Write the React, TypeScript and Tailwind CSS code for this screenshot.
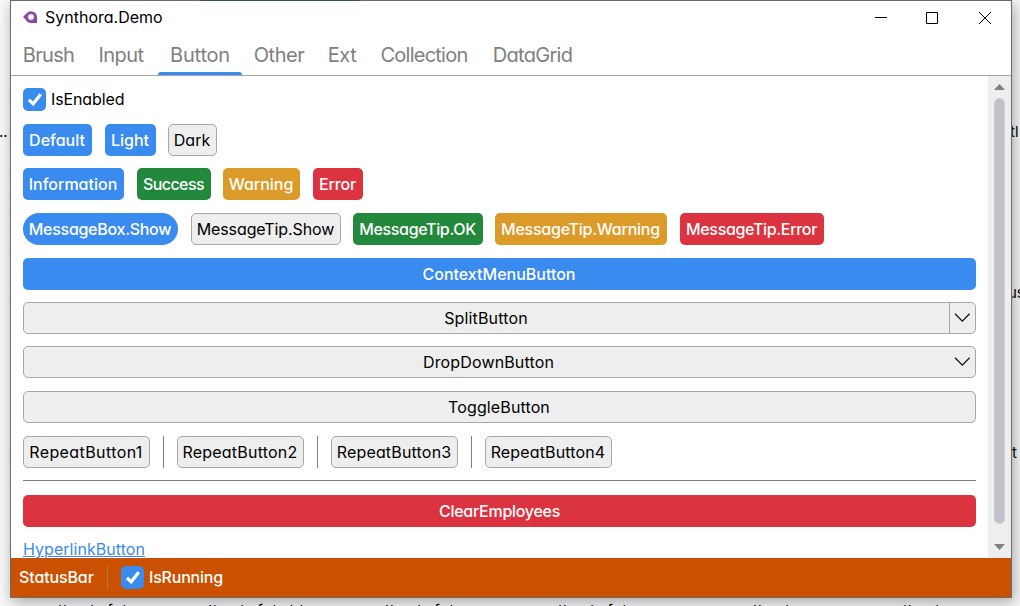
import type { ReactNode } from "react";

const tones = {
  blue: "bg-[#3a8bf0] text-white font-medium",
  green: "bg-[#21883c] text-white font-medium",
  amber: "bg-[#dc9a28] text-white font-medium",
  red: "bg-[#dc3340] text-white font-medium",
  plain: "bg-[#eeeeee] text-black border border-[#a8a8a8]",
};

type ButtonProps = { tone: keyof typeof tones; className?: string; children: ReactNode };

function Button({ tone, className = "rounded-[5px]", children }: ButtonProps) {
  return (
    <button
      className={`flex h-8 shrink-0 items-center justify-center whitespace-nowrap ${tones[tone]} ${className}`}
    >
      {children}
    </button>
  );
}

function CheckMark() {
  return (
    <span className="flex size-[23px] shrink-0 items-center justify-center rounded-[5px] bg-[#3a8bf0]">
      <svg width="23" height="23" viewBox="0 0 23 23" fill="none" stroke="white" strokeWidth="3.2">
        <path d="M6 11.8 10.2 15.8 17.7 6.3" />
      </svg>
    </span>
  );
}

function Chevron() {
  return (
    <svg width="16" height="10" viewBox="0 0 16 10" fill="none" stroke="#111" strokeWidth="1.3">
      <path d="M1 .8 8.3 8.1 15.6 .8" />
    </svg>
  );
}

const tabs = [
  { label: "Brush", width: "w-[75px]", tracking: "tracking-[-0.7px]" },
  { label: "Input", width: "w-[72px]", tracking: "tracking-[-0.6px]" },
  { label: "Button", width: "w-[84px]", tracking: "tracking-[-0.2px]" },
  { label: "Other", width: "w-[74px]", tracking: "tracking-[-0.5px]" },
  { label: "Ext", width: "w-[52px]", tracking: "tracking-[-0.4px]" },
  { label: "Collection", width: "w-[112px]", tracking: "tracking-[-0.75px]" },
  { label: "DataGrid", width: "w-[105px]", tracking: "tracking-[-0.7px]" },
];

function TitleBar() {
  return (
    <header className="flex h-[33px] shrink-0 items-center pl-3">
      <svg className="-mt-px" width="15" height="14" viewBox="0 0 15 14">
        <path d="M0 7 3 4A6 6 0 0 1 14 6.5V13H8A6 6 0 0 1 2.6 9.6Z" fill="#8746a5" />
        <circle cx="8" cy="7" r="3" fill="white" stroke="#c9a4d8" />
      </svg>
      <span className="-mt-0.5 ml-[7px] flex-1 leading-none">Synthora.Demo</span>
      <svg width="118" height="14" viewBox="0 0 118 14" fill="none" stroke="black" className="mr-[19px] mt-px">
        <path d="M1 6.5h12M52.5 1.5h11v11h-11zM105 1l12 12M117 1l-12 12" />
      </svg>
    </header>
  );
}

function Tabs() {
  return (
    <nav className="flex h-[42px] shrink-0 border-b border-[#a5a5a5] text-[20px] text-[#808080]">
      {tabs.map(({ label, width, tracking }) => (
        <div key={label} className={`flex shrink-0 flex-col first:mr-[-1px] first:w-[75px] [&:nth-child(3)]:ml-px ${width} ${tracking}`}>
          <span className="flex h-[38px] items-center justify-center pt-[3px] leading-none">{label}</span>
          {label === "Button" && <span className="h-[3px] shrink-0 rounded-t-sm bg-[#3a8bf0]" />}
        </div>
      ))}
    </nav>
  );
}

function ScrollBar() {
  return (
    <div className="flex w-[23px] shrink-0 flex-col items-center bg-[#eeeeee]">
      <svg className="mt-2 shrink-0" width="11" height="6" viewBox="0 0 11 6">
        <path d="M0 6 5.5 0 11 6Z" fill="#808080" />
      </svg>
      <div className="mt-2 h-[426px] w-[11px] shrink-0 rounded-full border border-[#cdced4] bg-[#c1c2c9]" />
      <svg className="mt-5 shrink-0" width="11" height="6" viewBox="0 0 11 6">
        <path d="M0 0 5.5 6 11 0Z" fill="#808080" />
      </svg>
    </div>
  );
}

const repeaters = [
  { n: 1, tracking: "tracking-[0.4px]" },
  { n: 2, tracking: "tracking-[0.22px]" },
  { n: 3, tracking: "tracking-[0.18px]" },
  { n: 4, tracking: "tracking-[0.15px]" },
];

function Repeaters() {
  return (
    <div className="mt-[13px] flex">
      {repeaters.map(({ n, tracking }) => (
        <div key={n} className={`flex ${tracking}`}>
          {n > 1 && <span className="mx-[13px] h-8 w-px bg-[#808080]" />}
          <Button tone="plain" className="w-[127px] rounded-[5px] pr-px">
            {`RepeatButton${n}`}
          </Button>
        </div>
      ))}
    </div>
  );
}

function Content() {
  return (
    <main className="flex flex-1 flex-col overflow-hidden px-3 pt-3">
      <label className="flex items-center gap-[5px]">
        <CheckMark />
        <span className="-mt-0.5 tracking-[-0.12px]">IsEnabled</span>
      </label>
      <div className="mt-[13px] flex">
        <Button tone="blue" className="w-[69px] rounded-[5px] pr-px">Default</Button>
        <Button tone="blue" className="ml-[13px] w-[51px] rounded-[5px] pr-px">Light</Button>
        <Button tone="plain" className="ml-3 w-[49px] rounded-[5px] pr-px">Dark</Button>
      </div>
      <div className="mt-3 flex">
        <Button tone="blue" className="w-[101px] rounded-[5px] pr-px">Information</Button>
        <Button tone="green" className="ml-[13px] w-[74px] rounded-[5px] pr-px tracking-[-0.55px]">Success</Button>
        <Button tone="amber" className="ml-3 w-[77px] rounded-[5px] pr-px">Warning</Button>
        <Button tone="red" className="ml-[13px] w-[50px] rounded-[5px] pr-px tracking-[-0.2px]">Error</Button>
      </div>
      <div className="mt-[13px] flex">
        <Button tone="blue" className="w-[155px] rounded-full pr-px tracking-[-0.28px]">MessageBox.Show</Button>
        <Button tone="plain" className="ml-[13px] w-[150px] rounded-[5px] pr-px tracking-[-0.1px]">MessageTip.Show</Button>
        <Button tone="green" className="ml-3 w-[130px] rounded-[5px] pr-px tracking-[-0.33px]">MessageTip.OK</Button>
        <Button tone="amber" className="ml-3 w-[172px] rounded-[5px] pr-px tracking-[-0.24px]">MessageTip.Warning</Button>
        <Button tone="red" className="ml-[13px] w-[144px] rounded-[5px] pr-px tracking-[-0.32px]">MessageTip.Error</Button>
      </div>
      <Button tone="blue" className="mt-[13px] w-full rounded-[5px] pr-px">ContextMenuButton</Button>
      <div className="mt-3 flex h-8 shrink-0 rounded-[5px] border border-[#a8a8a8] bg-[#eeeeee]">
        <button className="flex-1 pr-px tracking-[0.15px]">SplitButton</button>
        <button className="flex w-[26px] items-center justify-center border-l border-[#a8a8a8] pr-px">
          <Chevron />
        </button>
      </div>
      <div className="mt-3 flex h-8 shrink-0 items-center rounded-[5px] border border-[#a8a8a8] bg-[#eeeeee] pr-[5px]">
        <button className="flex-1 pr-px tracking-[0.15px]">DropDownButton</button>
        <Chevron />
      </div>
      <Button tone="plain" className="mt-[13px] w-full rounded-[5px] pr-px tracking-[0.12px]">ToggleButton</Button>
      <Repeaters />
      <hr className="mt-3 h-0 shrink-0 border-t border-[#808080]" />
      <Button tone="red" className="mt-[14px] w-full rounded-[5px] tracking-[-0.28px]">ClearEmployees</Button>
      <a className="mt-[11px] self-start tracking-[0.05px] text-[#3a8bf0] underline">HyperlinkButton</a>
    </main>
  );
}

/* The document behind the window, visible only around its edges. */
function Backdrop() {
  return (
    <div className="absolute inset-0 text-[15px]">
      <span className="absolute -left-px top-[121px]">..</span>
      <span className="absolute left-[1010px] top-[121px]">tl</span>
      <span className="absolute left-[1008px] top-[282px]">us</span>
      <span className="absolute left-[1012px] top-[442px]">t</span>
      <div className="absolute left-[58px] top-[600px] flex whitespace-nowrap">
        <span className="w-[150px]">the do f do</span>
        <span className="w-[177px]">the do f do td</span>
        <span className="w-[173px]">the do f do</span>
        <span className="w-[195px]">the do f do</span>
        <span className="w-[150px]">the do</span>
        <span>the do</span>
      </div>
    </div>
  );
}

export default function App() {
  return (
    <div className="relative h-[606px] w-[1020px] overflow-hidden bg-[#f9f9f9] font-['Inter','Noto_Sans',sans-serif] text-base leading-[22px] text-black [font-feature-settings:'cv11']">
      <Backdrop />
      <section className="absolute left-[10px] top-0 flex h-[598px] w-[1002px] flex-col border border-[#6b6b6b] bg-white shadow-[2px_4px_14px_rgba(0,0,0,0.35)]">
        <span className="absolute -top-px left-[189px] h-px w-40 bg-[#365a38]" />
        <TitleBar />
        <Tabs />
        <div className="flex min-h-0 flex-1">
          <Content />
          <ScrollBar />
        </div>
        <footer className="flex h-[39px] shrink-0 items-center bg-[#ca5100] pl-2 font-medium text-white">
          <span className="-mt-0.5 w-[75px] tracking-[-0.12px]">StatusBar</span>
          <span className="ml-[13px] h-[23px] w-px bg-[#a87d4f]" />
          <label className="ml-[13px] flex items-center gap-[5px]">
            <CheckMark />
            <span className="-mt-0.5 tracking-[-0.2px]">IsRunning</span>
          </label>
        </footer>
      </section>
    </div>
  );
}
